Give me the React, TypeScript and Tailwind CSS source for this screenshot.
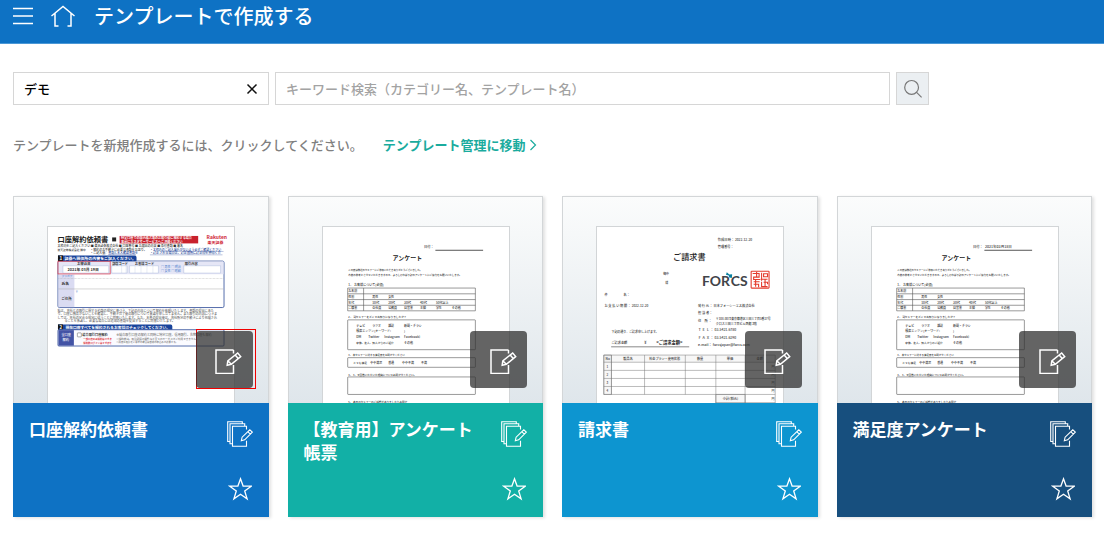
import { useState, type ReactNode } from 'react';

type Line = [x: number, y: number, text: string, size?: number];

function Lines({ items, fill = '#333' }: { items: Line[]; fill?: string }) {
  return (
    <g fill={fill}>
      {items.map(([x, y, text, size = 3], i) => (
        <text key={i} x={x} y={y} fontSize={size}>{text}</text>
      ))}
    </g>
  );
}

function Page({ label, children }: { label: string; children: ReactNode }) {
  return (
    <svg role="img" aria-label={label} viewBox="0 0 186 177" className="mx-auto block h-[177px] w-[188px] border border-b-0 border-[#d2d5d7] bg-white font-medium">
      {children}
    </svg>
  );
}

function AccountClosingForm() {
  return (
    <Page label="口座解約依頼書のプレビュー">
      <text x="9" y="15.5" fontSize="7.3" fontWeight="700" fill="#222">口座解約依頼書</text>
      <rect x="64" y="10.5" width="4" height="4" fill="#222" />
      <rect x="71.5" y="9" width="79" height="7.5" fill="#c8202c" />
      <g fontWeight="700">
        <Lines fill="#fff" items={[[73, 12.3, '特定口座での国内株式等のお取引後に解約する場合', 3.1], [73, 15.8, '事前にカスタマーサービスへご連絡ください', 3.1]]} />
        <text x="159" y="12.5" fontSize="5" fill="#d01f36">Rakuten</text>
        <text x="160" y="17.2" fontSize="4" fill="#d01f36">楽天証券</text>
      </g>
      <Lines items={[[9, 19.7, '太枠内をご記入ください ■ 楽天証券株式会社 ■ 口座番号 ■ お届出の内容 ■ 添付書類 ■ 署名', 3], [9, 24, '楽天証券株式会社 御中', 2.8], [42, 24, '・解約のお手続きに必要な書類をお送り。'], [42, 27.2, '・ご記入後、', 3]]} />
      <Lines fill="#203f95" items={[[60, 27.2, '書類と本人確認書類を'], [102, 24, '・太枠内のご記入漏れがないよう必ずご確認ください'], [102, 27.5, '・訂正される場合は、訂正箇所に訂正印を押印くだ', 3.1]]} />
      <path d="M102 28h73M114 24.6h62M60 27.8h28" stroke="#5269ae" strokeWidth=".4" />
      <rect x="9.5" y="34.3" width="167" height="46.7" rx="1.5" fill="#fff" stroke="#294795" strokeWidth=".8" />
      <path d="M10 34.7h166v12.8H10z" fill="#e5e6f6" />
      <path d="M10 47.7h16v32.9H10z" fill="#dadbf2" />
      <path d="M9.5 28.6H87q1.5 0 1.5 2v3.8h-79z" fill="#18439b" />
      <rect x="9.5" y="28.6" width="5" height="5.6" fill="#171717" />
      <g fontWeight="700"><Lines fill="#fff" items={[[11, 33, '1', 4.6], [16, 33, '証券へ現住所の内容をご記入ください。', 4]]} /></g>
      <g fill="#fff" stroke="#9eb0d7" strokeWidth=".4">
        <path d="M14.5 39h46v7.3h-46zM63.5 39h15.5v7.3H63.5zM81.5 39h29v7.3h-29zM136 39h37v7.3h-37z" />
        <path d="M73.5 39v7.3M78 39v7.3M87 39v7.3M93 39v7.3M99 39v7.3M105 39v7.3" strokeDasharray=".6 .5" />
      </g>
      <g fontWeight="700"><Lines items={[[29, 38, 'お申込日', 3.3], [64, 38, '部店コード', 3.2], [87, 38, 'お客様コード', 3.2], [137, 38, '取引内容', 3.3], [19, 44.3, '2021年 03月 19日', 3.9], [13, 58.5, '氏名', 3.8], [13, 73, 'ご住所', 3.4]]} /></g>
      <Lines fill="#5f8bd0" items={[[113, 41, '□ 男性 □ 明治'], [113, 45.5, '□ 女性 □ 昭和'], [13, 50.5, 'フリガナ', 2.8], [27, 66.5, '〒']]} />
      <rect x="9.5" y="34.4" width="52.5" height="12.8" fill="none" stroke="#e33543" strokeWidth=".7" />
      <path d="M10 62.3h166" stroke="#aaa" strokeWidth=".5" />
      <path d="M10 51.8h166" stroke="#aaa" strokeWidth=".5" strokeDasharray=".7 .7" />
      <Lines fill="#666" items={[
        [9, 85.4, '私は、貴社との取引に関する約款の規定に基づき、下記の内容について解約を依頼いたします。書類の提出にあた', 3.1],
        [9, 88.9, 'り、口座に残高がないことを確認し、手続き完了後の取引について異議を申し立てません。また取引の内容につきま', 3.1],
        [9, 92.4, 'しては、貴社の定める規定に従うことに同意いたします。なお、本書の提出後は、貴社所定の手続きにより処理され', 3.1],
        [16, 95.9, 'ることを承諾し、必要な場合には追加の書類を提出することに同意いたします。', 3.1],
      ]} />
      <path d="M9.5 98H123q1.5 0 1.5 2v3.4h-115z" fill="#18439b" />
      <rect x="9.5" y="98" width="5" height="5.2" fill="#171717" />
      <g fontWeight="700"><Lines fill="#fff" items={[[11, 102.3, '2', 4.3], [17, 102.3, '現在口座すべてを解約されるお客様はチェックしてください。', 3.8]]} /></g>
      <rect x="9.5" y="103.3" width="167" height="16.4" rx="1" fill="#fbfbff" stroke="#294795" strokeWidth=".8" />
      <path d="M10 103.7h15.5v15.6H10z" fill="#4253a5" />
      <Lines fill="#fff" items={[[13, 110, '全口座', 3.2], [14, 114.5, '解約', 3.3]]} />
      <rect x="29" y="106.5" width="4" height="4" rx=".5" fill="#fff" stroke="#555" strokeWidth=".5" />
      <g fontWeight="700"><Lines items={[[34, 109.4, '総合取引口座解約', 3.2]]} /><Lines fill="#dd3038" items={[[35, 113.4, '一部口座のみ解約はできま', 2.4], [35, 117.2, '解約後ログインはできませ', 2.4]]} /></g>
      <Lines fill="#777" items={[[68, 109.3, '※総合取引口座の解約と同時に特定口座、信用取引、先物口座も解約', 3.1], [68, 113.2, '※解約後は、取引履歴の閲覧など全てのサービスがご利用できません。', 2.6], [68, 117, '※再度お取引をご希望の場合は新規の申込みが必要です。', 2.4]]} />
    </Page>
  );
}

function SurveyForm({ date }: { date?: string }) {
  return (
    <Page label="アンケートのプレビュー">
      <Lines items={[
        [101, 21.5, '日付：', 3.3],
        [25, 44, 'この度は弊社のセミナーにご参加いただきありがとうございました。', 2.4],
        [25, 49.6, '今後の参考とさせていただきますので、よろしければ下記のアンケートにご協力をお願いいたします。', 2.5],
        [25, 59.5, '1． お客様について(必須)', 3.1], [25, 65.6, 'お名前'], [25, 71.4, '性別'], [25, 77, '年代'], [25, 82.7, 'ご職業'],
        [49, 71.4, '男性'], [65, 71.4, '女性'], [49, 77, '10代', 3.3], [65, 77, '20代', 3.3], [81, 77, '30代', 3.3], [97, 77, '40代', 3.3], [113, 77, '50代以上', 3.1],
        [49, 82.7, '会社員'], [65, 82.7, '公務員'], [81, 82.7, '自営業'], [97, 82.7, '主婦'], [113, 82.7, '学生'], [129, 82.7, 'その他'],
        [25, 91.6, '2． 当セミナーをどこでお知りになりましたか？', 2.7],
        [33, 100.2, 'テレビ'], [49, 100.2, 'ラジオ'], [65, 100.2, '雑誌'], [81, 100.2, '新聞・チラシ'],
        [33, 106, '検索エンジン(キーワード:'], [81, 106, ')'],
        [33, 111.7, 'DM', 3.3], [45, 111.7, 'Twitter', 3.3], [61, 111.7, 'Instagram', 3.3], [81, 111.7, 'Facebook)', 3.3],
        [33, 117.4, '家族、友人、知人からのご紹介', 2.7], [81, 117.4, 'その他'],
        [25, 129.8, '3． 本セミナーに対する満足度をお聞かせください', 2.5],
        [30, 137.4, 'とても満足', 2.8], [47, 137.4, 'やや満足'], [65, 137.4, '普通'], [79, 137.4, 'やや不満'], [98, 137.4, '不満'],
        [25, 149.4, '4． 3．で回答いただいた理由についてお聞かせください。', 2.6],
        [25, 177.5, '5． 本日のセミナーのご感想がありましたらお聞か', 2.6],
      ]} />
      {date && <text x="113" y="21.5" fontSize="3.6" fill="#333">{date}</text>}
      <text x="69.5" y="33.5" fontSize="6" fontWeight="700" fill="#222">アンケート</text>
      <path d="M112.5 23.4h48" stroke="#555" strokeWidth="1" />
      <g fill="none" stroke="#555" strokeWidth=".6">
        <path d="M24.3 61.4h128.4v22.9H24.3zM24.3 67.2h128.4M24.3 73h128.4M24.3 78.7h128.4M40.3 61.4v22.9" />
        <rect x="24.3" y="93.4" width="128.4" height="30" rx=".5" />
        <rect x="24.3" y="131.4" width="128.4" height="9.7" rx=".5" />
        <rect x="24.3" y="150.8" width="128.4" height="17.6" rx=".5" />
      </g>
    </Page>
  );
}

function InvoiceForm() {
  return (
    <Page label="請求書のプレビュー">
      <Lines items={[
        [121, 14.4, '作成日時： 2022-12-20', 3.3], [121, 21.4, '管理番号：', 3.2], [66, 48.6, '御中'], [68, 57.6, '様'],
        [7, 69.5, '件　　　　　名：', 3.2], [7, 80.5, 'お 支 払 い 期 限 ： 2022-12-20', 3.2],
        [101, 80.5, '発 行 元 ： 日本フォーシーエス株式会社', 3.2], [101, 87.6, '担 当 者：', 3.3], [101, 96, '住　所 ：', 3.3],
        [119, 94, '〒108-0073東京都港区三田三丁目5番27号', 2.9], [119, 98.2, 'クロス三田三丁目ビル西館 3階', 3],
        [101, 104.6, 'Ｔ Ｅ Ｌ ： 03-5421-6780', 3.4], [101, 112.2, 'Ｆ Ａ Ｘ ： 03-5421-6290', 3.4], [101, 120, 'e-mail： forcsjapan@forcs.com', 3.5],
        [14, 107, '下記の通り、ご請求申し上げます。', 3], [14, 118, 'ご請求金額', 3.2], [47, 118, '¥', 4],
        [8, 133.6, 'No', 3.3], [26, 133.6, '製品名', 3.2], [52, 133.6, '料金プラン・使用状態', 3.1], [100, 133.6, '数量', 3.2], [130, 133.6, '単価', 3.2], [160, 133.6, '金額', 3.2],
        [9, 141.5, '1'], [9, 149.5, '2'], [9, 157.5, '3'], [9, 165.5, '4'], [175, 141.5, '円'], [175, 149.5, '円'], [175, 157.5, '円'], [175, 165.5, '円'], [175, 174, '円'],
        [126, 174, '小計(税込)', 3.3],
      ]} />
      <text x="76" y="33.5" fontSize="8.2" fill="#222">ご請求書</text>
      <text x="59" y="118" fontSize="4.3" fontWeight="700" fill="#222">&lt;ご請求金額&gt;</text>
      <path d="M13.7 120.5h78.5" stroke="#555" strokeWidth=".7" />
      <g fontSize="14" fontWeight="700" fill="#414449" fontFamily="Lato, sans-serif">
        <text x="105" y="59">FOR</text>
        <text x="134" y="59">CS</text>
      </g>
      <path d="M130 45.5l2.6 2.2 2.8-.3-.3 4-2.6-.5-.5-2.2-2.8-.8z" fill="#087f9f" />
      <g fill="none" stroke="#e43c2e" strokeWidth="1.1">
        <rect x="154.5" y="44.5" width="18" height="17" rx=".6" />
        <path d="M156 46.8h6.5v3.6H157v2.4h6.5M157 55h6M157 57.5h5v3M159 53v7M165 46v8M167 47h4v3h-4zM164 52.5h7M165 55v5h6M168.5 53v7M160 45v6M167 55.5h4v2" />
      </g>
      <g fill="none" stroke="#777" strokeWidth=".5">
        <path d="M6.3 128.8h172.4v7.3H6.3z" fill="#8881" stroke="none" />
        <path d="M6.3 128.8h7.7v39.6H6.3zM119 168.4h29.5v9H119z" fill="#8881" />
        <path d="M6.3 128.8h172.4V177M6.3 136h172.4M6.3 144.2h172.4M6.3 152.3h172.4M6.3 160.4h172.4M6.3 168.4h172.4M6.3 128.8v39.6M14 128.8v39.6M47.3 128.8v39.6M88.3 128.8v39.6M119 128.8V177M148.4 128.8V177M119 176.6h59.7" />
      </g>
    </Page>
  );
}

function EditIcon() {
  return (
    <svg viewBox="0 0 28 28" className="size-7" fill="none" stroke="currentColor" strokeWidth="1.5" aria-hidden="true">
      <path d="M19.5 4H2v23.5h17.5V19M19.5 4v3.5" />
      <path d="M13.2 19.2l.6-4.4L23.7 7l3 3.6-9.4 7.7zM21.2 9l3 3.6M13.8 14.8l3.5 3.5" />
    </svg>
  );
}

function CopyEditIcon() {
  return (
    <svg viewBox="0 0 26 26" className="h-[26px] w-[26px]" fill="none" stroke="currentColor" strokeWidth="1.1" aria-hidden="true">
      <path d="M3 20.5H.7V.7h14.6v1.8M5.5 22.8H3V2.8h14.7v2M19.5 8.5V5.2H5.5v20.1h14v-5.5" />
      <path d="M14.3 19.8l.8-3.6 7.7-7.4 2.5 2.4-7.6 7.6zM20.8 10.7l2.5 2.4" />
    </svg>
  );
}

function StarIcon() {
  return (
    <svg viewBox="0 0 24 24" className="size-6" fill="none" stroke="currentColor" strokeWidth="1.3" aria-hidden="true">
      <path d="M12.5 1.8l2.6 7.2 8.1.2-6.5 4.8 2.4 7.8-6.6-4.6-6.6 4.6 2.4-7.8-6.5-4.8 8.1-.2z" />
    </svg>
  );
}

type Template = { title: string; color: string; preview: ReactNode; highlighted?: boolean };

const templates: Template[] = [
  { title: '口座解約依頼書', color: 'bg-[#0e72c4]', preview: <AccountClosingForm />, highlighted: true },
  { title: '【教育用】アンケート帳票', color: 'bg-[#12b0a6]', preview: <SurveyForm /> },
  { title: '請求書', color: 'bg-[#0d95d0]', preview: <InvoiceForm /> },
  { title: '満足度アンケート', color: 'bg-[#174f7e]', preview: <SurveyForm date="2021年03月18日" /> },
];

function TemplateCard({ title, color, preview, highlighted }: Template) {
  const [starred, setStarred] = useState(false);
  return (
    <li className="min-w-0 shadow-[2px_1px_3px_rgba(0,0,0,0.12)]">
      <div className="relative h-[207px] overflow-hidden border border-b-0 border-[#d3d6d8] bg-linear-to-b from-[#fbfcfc] to-[#dfe6eb] pt-[29px] pl-px">
        {preview}
        <div className={`absolute right-3 bottom-3.5 border pt-px pr-0.5 ${highlighted ? 'border-[#f00000]' : 'border-transparent'}`}>
          <button type="button" aria-label={`${title}を編集`} className="-ml-px flex h-[57px] w-[57px] items-center justify-center rounded-sm bg-[#303030]/75 pl-2 text-white">
            <EditIcon />
          </button>
        </div>
      </div>
      <div className={`flex h-[114px] justify-between pt-3.5 pr-4 pb-4 pl-4 text-white ${color}`}>
        <h2 className="max-w-[176px] text-[17px] leading-[23px] font-bold">{title}</h2>
        <div className="flex flex-col items-center justify-between pt-1">
          <button type="button" aria-label={`${title}を複製して編集`}><CopyEditIcon /></button>
          <button type="button" aria-label="お気に入り" aria-pressed={starred} onClick={() => setStarred(!starred)}><StarIcon /></button>
        </div>
      </div>
    </li>
  );
}

export default function App() {
  const [category, setCategory] = useState('デモ');
  return (
    <div lang="ja" className="min-h-screen bg-white font-['Noto_Sans_CJK_JP',sans-serif]">
      <header className="flex h-11 items-center border-b border-[#4b98d6] bg-[#0e72c4] pb-[11px] pl-3 text-white">
        <button type="button" aria-label="メニュー">
          <svg viewBox="0 0 22 20" className="h-5 w-[22px]" stroke="currentColor" strokeWidth="1.6" aria-hidden="true"><path d="M1 2.5h20M1 10h20M1 17.5h20" /></svg>
        </button>
        <a href="#home" aria-label="ホーム" className="ml-4">
          <svg viewBox="0 0 26 22" className="h-[22px] w-[26px]" fill="none" stroke="currentColor" strokeWidth="1.5" aria-hidden="true"><path d="M1.5 11L13 1.5 24.5 11M5 8.5V21h3.5M21 8.5V21h-3.5" /></svg>
        </a>
        <h1 className="ml-[18px] text-[20px] leading-7 font-medium">テンプレートで作成する</h1>
      </header>
      <main className="pt-7 pr-3 pb-5 pl-[13px]">
        <form role="search" className="flex max-w-[916px] gap-1.5 text-[13px] font-medium" onSubmit={(e) => e.preventDefault()}>
          <div className="flex h-[33px] w-64 shrink-0 items-center border border-[#d6d6d6] pr-2">
            <input aria-label="カテゴリー" value={category} onChange={(e) => setCategory(e.target.value)} className="h-full min-w-0 flex-1 pl-2.5 text-black outline-none" />
            <button type="button" aria-label="クリア" onClick={() => setCategory('')}>
              <svg viewBox="0 0 16 16" className="size-4" stroke="#111" strokeWidth="1.5" aria-hidden="true"><path d="M3.5 3.5l9 9M12.5 3.5l-9 9" /></svg>
            </button>
          </div>
          <input aria-label="キーワード検索" placeholder="キーワード検索（カテゴリー名、テンプレート名）" className="h-[33px] min-w-0 flex-1 border border-[#d6d6d6] pl-2.5 outline-none placeholder:text-[#a3a3a3]" />
          <button type="submit" aria-label="検索" className="flex size-[33px] shrink-0 items-center justify-center border border-[#d6d6d6] bg-[#ebeff2]">
            <svg viewBox="0 0 20 20" className="size-5" fill="none" stroke="#777" strokeWidth="1.2" aria-hidden="true"><circle cx="8.6" cy="8.4" r="6.9" /><path d="M13.6 13.4l5 5" /></svg>
          </button>
        </form>
        <p className="mt-[30px] flex items-center text-[13px] leading-5 font-medium text-[#808080]">
          テンプレートを新規作成するには、クリックしてください。
          <a href="#templates" className="ml-5 flex items-center gap-1 font-bold text-[#1aab9e]">
            テンプレート管理に移動
            <svg viewBox="0 0 8 12" className="h-3 w-2" fill="none" stroke="currentColor" strokeWidth="1.2" aria-hidden="true"><path d="M1.5 1l5 5-5 5" /></svg>
          </a>
        </p>
        <ul className="mt-[41px] grid grid-cols-4 gap-[19px]">
          {templates.map((t) => <TemplateCard key={t.title} {...t} />)}
        </ul>
      </main>
    </div>
  );
}
